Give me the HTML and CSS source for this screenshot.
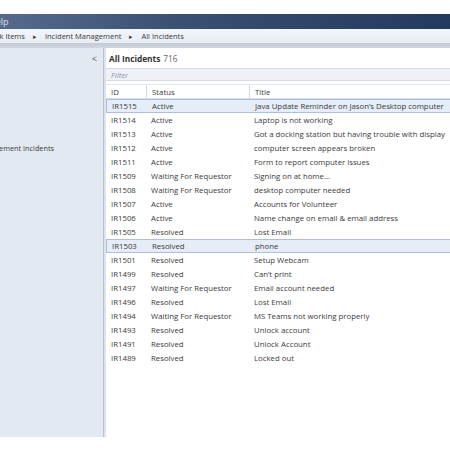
FILE: index.html
```html
<!DOCTYPE html>
<html lang="en">
<head>
    <meta charset="UTF-8">
    <title>All Incidents</title>
    <link rel="stylesheet" href="styles.css">
</head>
<body>
    <div class="top-gap"></div>
    <div class="title-bar"><span class="menu-text">Help</span></div>
    <div class="breadcrumb">
        <span class="crumb crumb-first">Work Items</span>
        <span class="crumb-arrow">&#9656;</span>
        <span class="crumb">Incident Management</span>
        <span class="crumb-arrow">&#9656;</span>
        <span class="crumb">All Incidents</span>
    </div>
    <div class="splitter"></div>

    <div class="main">
        <div class="nav-panel">
            <div class="nav-header"><span class="collapse">&lt;</span></div>
            <div class="nav-item">Management Incidents</div>
        </div>
        <div class="divider"></div>
        <div class="list-panel">
            <div class="list-header">
                <span class="list-title">All Incidents</span>
                <span class="list-count">716</span>
            </div>
            <div class="filter">Filter</div>
            <div class="grid">
                <div class="row head-row">
                    <div class="cell col-id">ID</div>
                    <div class="cell col-status">Status</div>
                    <div class="cell col-title">Title</div>
                </div>
                <div id="rows"></div>
            </div>
        </div>
    </div>

    <script>
        const incidents = [
            ['IR1515', 'Active', 'Java Update Reminder on Jason\u2019s Desktop computer', true],
            ['IR1514', 'Active', 'Laptop is not working'],
            ['IR1513', 'Active', 'Got a docking station but having trouble with display'],
            ['IR1512', 'Active', 'computer screen appears broken'],
            ['IR1511', 'Active', 'Form to report computer issues'],
            ['IR1509', 'Waiting For Requestor', 'Signing on at home...'],
            ['IR1508', 'Waiting For Requestor', 'desktop computer needed'],
            ['IR1507', 'Active', 'Accounts for Volunteer'],
            ['IR1506', 'Active', 'Name change on email & email address'],
            ['IR1505', 'Resolved', 'Lost Email'],
            ['IR1503', 'Resolved', 'phone', true],
            ['IR1501', 'Resolved', 'Setup Webcam'],
            ['IR1499', 'Resolved', 'Can\u2019t print'],
            ['IR1497', 'Waiting For Requestor', 'Email account needed'],
            ['IR1496', 'Resolved', 'Lost Email'],
            ['IR1494', 'Waiting For Requestor', 'MS Teams not working properly'],
            ['IR1493', 'Resolved', 'Unlock account'],
            ['IR1491', 'Resolved', 'Unlock Account'],
            ['IR1489', 'Resolved', 'Locked out']
        ];

        const rowsDiv = document.getElementById('rows');
        incidents.forEach(function(item) {
            const row = document.createElement('div');
            row.className = item[3] ? 'row selected' : 'row';
            row.innerHTML =
                '<div class="cell col-id">' + item[0] + '</div>' +
                '<div class="cell col-status">' + item[1] + '</div>' +
                '<div class="cell col-title">' + item[2] + '</div>';
            rowsDiv.appendChild(row);
        });
    </script>
</body>
</html>
```

FILE: styles.css
```css
:root {
    --text: #3a3a3a;
    --nav-bg: #e3e9f1;
    --line: #d3dae4;
    --select-bg: #e6edf8;
    --select-border: #adbfd9;
}

* {
    margin: 0;
    padding: 0;
    box-sizing: border-box;
}

body {
    width: 450px;
    height: 450px;
    overflow: hidden;
    background: #ffffff;
    color: var(--text);
    font-family: 'Open Sans', 'Noto Sans', sans-serif;
    font-size: 7.8px;
}

.top-gap {
    height: 14px;
}

.title-bar {
    height: 15px;
    background: linear-gradient(to right, #566b8b, #3a5070 40%, #233a5f);
    color: #d9e0ea;
    font-size: 9px;
    line-height: 15px;
    overflow: hidden;
    white-space: nowrap;
}

.menu-text {
    display: inline-block;
    margin-left: -11px;
}

.breadcrumb {
    height: 14px;
    display: flex;
    align-items: center;
    gap: 6px;
    background: linear-gradient(#f3f6fa, #e8edf4);
    font-size: 7.5px;
    white-space: nowrap;
    overflow: hidden;
}

.crumb-first {
    margin-left: -15px;
}

.crumb-arrow {
    font-size: 7px;
    color: #444;
    margin: 0 2px;
}

.splitter {
    height: 5px;
    background: linear-gradient(#c3cad5, #cfd6e0);
}

.main {
    display: flex;
    height: 389px;
}

.nav-panel {
    width: 103px;
    background: var(--nav-bg);
    overflow: hidden;
}

.nav-header {
    height: 20px;
    display: flex;
    align-items: center;
    justify-content: flex-end;
    padding-right: 6px;
}

.collapse {
    font-size: 9px;
    color: #555;
}

.nav-item {
    margin-top: 75px;
    margin-left: -24px;
    white-space: nowrap;
    font-size: 7.3px;
}

.divider {
    width: 3px;
    background: #dde3ec;
    border-left: 1px solid #b9c2cf;
}

.list-panel {
    flex: 1;
    overflow: hidden;
}

.list-header {
    height: 20px;
    display: flex;
    align-items: center;
    gap: 3px;
    padding-left: 3px;
    font-size: 8.3px;
}

.list-title {
    font-weight: 700;
    color: #333;
}

.list-count {
    color: #666;
}

.filter {
    height: 13px;
    line-height: 12px;
    background: #eef2f8;
    border-top: 1px solid var(--line);
    border-bottom: 1px solid var(--line);
    padding-left: 5px;
    font-style: italic;
    color: #8a95a5;
    font-size: 7.8px;
}

.grid {
    margin-top: 3px;
}

.row {
    display: flex;
    height: 14px;
    align-items: center;
    white-space: nowrap;
    border-top: 1px solid transparent;
    border-bottom: 1px solid transparent;
}

.head-row {
    height: 15px;
    border-top: 1px solid #e6eaf0;
    border-bottom: 1px solid var(--line);
}

.head-row .cell + .cell {
    border-left: 1px solid var(--line);
}

.row.selected {
    background: var(--select-bg);
    border-color: var(--select-border);
    border-left: 1px solid var(--select-border);
}

.cell {
    height: 100%;
    display: flex;
    align-items: center;
    padding-left: 5px;
    overflow: hidden;
}

.col-id {
    width: 40px;
}

.col-status {
    width: 103px;
}

.col-title {
    flex: 1;
}
```
